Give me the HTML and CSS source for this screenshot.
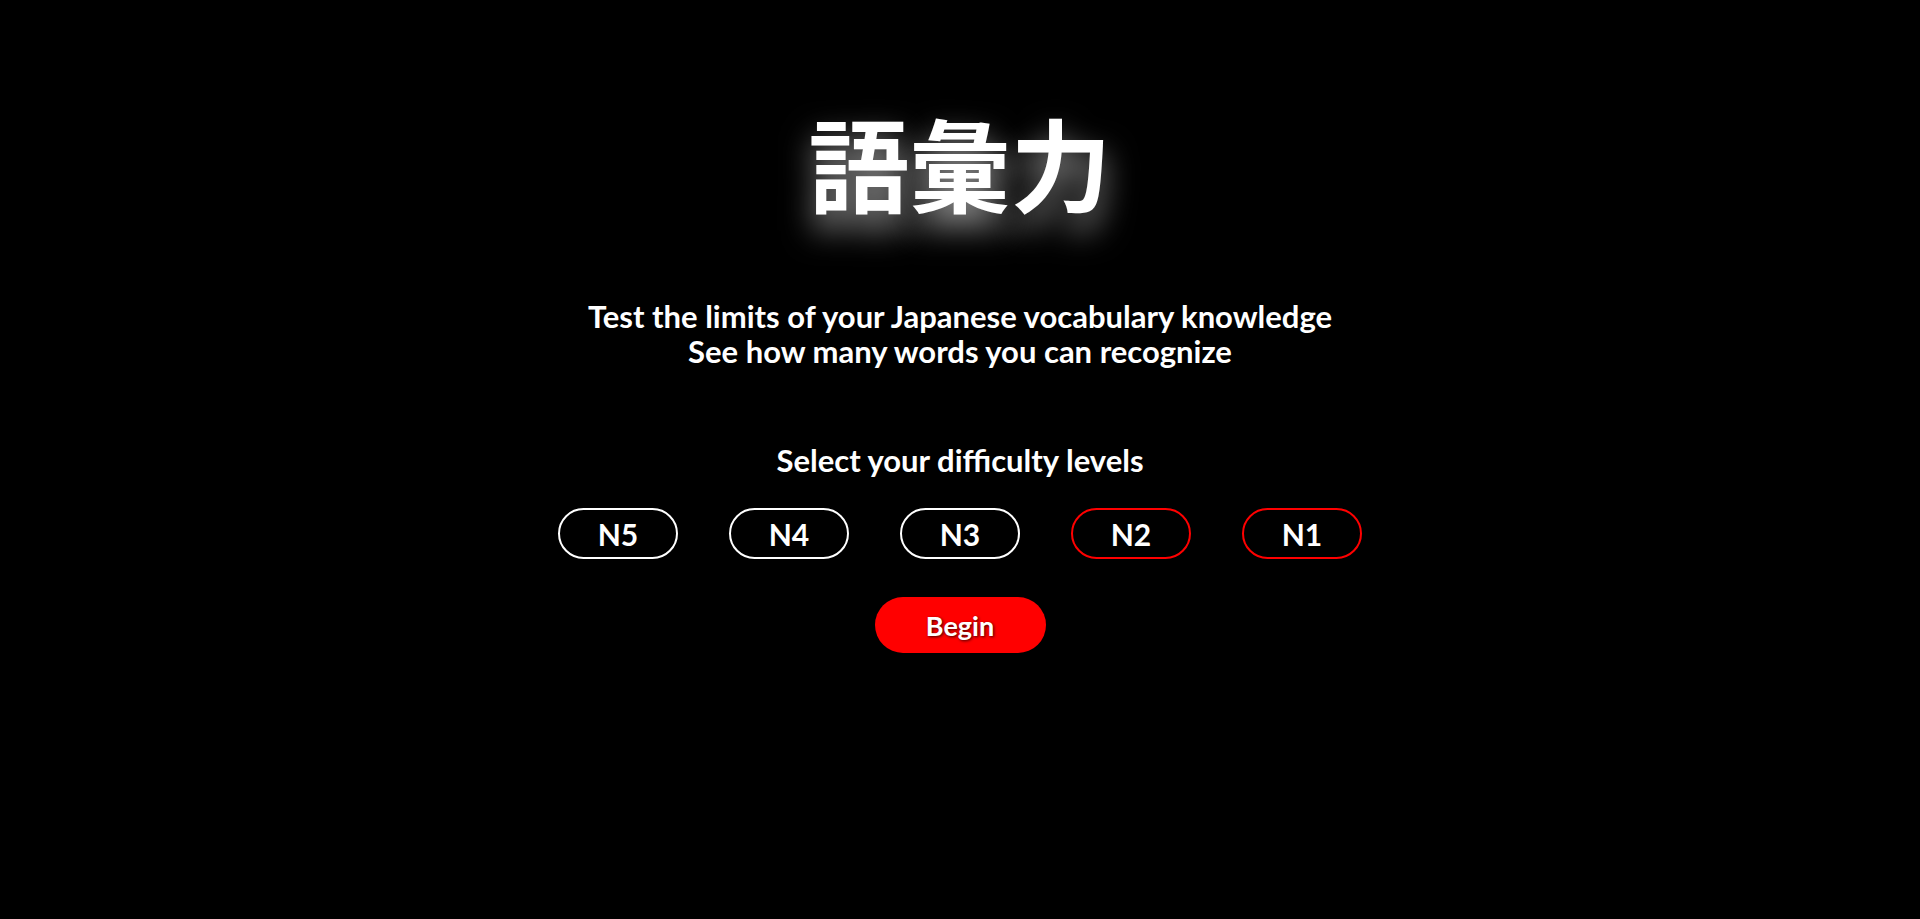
FILE: index.html
```html
<!DOCTYPE html>
<html lang="en">
<head>
<meta charset="utf-8">
<title>語彙力</title>
<link rel="stylesheet" href="styles.css">
</head>
<body>
<main class="page">
  <h1 class="title">語彙力</h1>
  <p class="subtitle">Test the limits of your Japanese vocabulary knowledge<br>See how many words you can recognize</p>
  <h2 class="select-label">Select your difficulty levels</h2>
  <div class="levels">
    <button class="level">N5</button>
    <button class="level">N4</button>
    <button class="level">N3</button>
    <button class="level level-hard">N2</button>
    <button class="level level-hard">N1</button>
  </div>
  <button class="begin">Begin</button>
</main>
</body>
</html>
```
FILE: styles.css
```css
html, body {
  margin: 0;
  padding: 0;
  background: #000;
  height: 100%;
}
body {
  font-family: "Lato", "Noto Sans", sans-serif;
  color: #fff;
}
.page {
  display: flex;
  flex-direction: column;
  align-items: center;
  padding-top: 92px;
}
.title {
  margin: 0;
  font-family: "Noto Sans CJK JP", sans-serif;
  font-weight: 700;
  font-size: 101px;
  line-height: 139px;
  letter-spacing: 0;
  text-shadow: 0 16px 32px rgba(255, 255, 255, 0.6);
}
.subtitle {
  margin: 68px 0 0;
  font-weight: 700;
  font-size: 31px;
  line-height: 35px;
  text-align: center;
}
.select-label {
  margin: 75px 0 0;
  font-weight: 700;
  font-size: 31px;
  line-height: 32px;
}
.levels {
  display: flex;
  gap: 51px;
  margin-top: 32px;
}
.level {
  width: 120px;
  height: 51px;
  box-sizing: border-box;
  border: 2px solid #fff;
  border-radius: 26px;
  background: #000;
  color: #fff;
  font-family: inherit;
  font-weight: 700;
  font-size: 30px;
  padding: 0;
}
.level-hard {
  border-color: #ff0000;
}
.begin {
  margin-top: 38px;
  width: 171px;
  height: 56px;
  border: none;
  border-radius: 28px;
  background: #ff0000;
  color: #fff;
  font-family: inherit;
  font-weight: 700;
  font-size: 27px;
  padding: 0;
  text-shadow: 1px 1px 3px rgba(0, 0, 0, 0.75);
}
```
